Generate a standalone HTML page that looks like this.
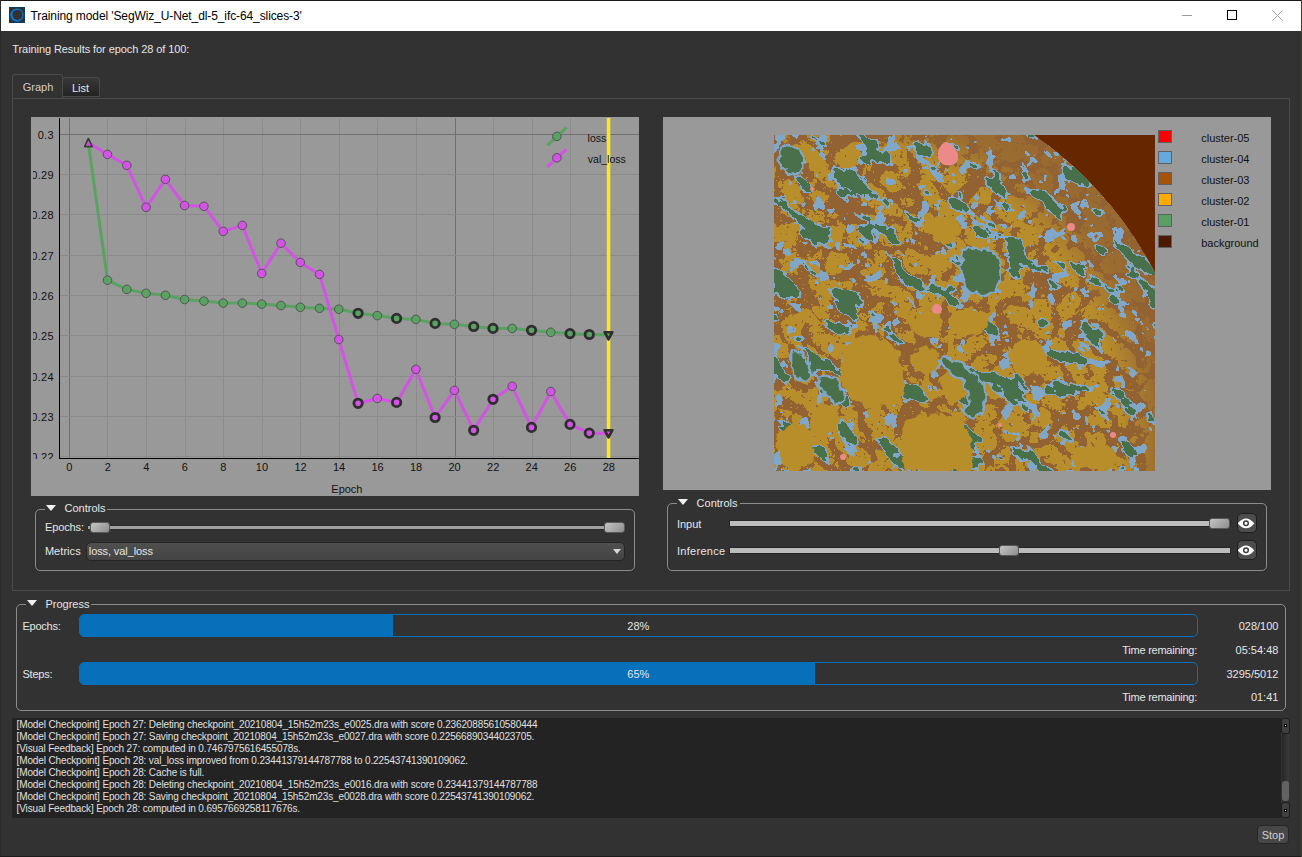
<!DOCTYPE html><html><head><meta charset="utf-8"><style>*{margin:0;padding:0;box-sizing:border-box}
html,body{width:1302px;height:857px;overflow:hidden;background:#323232;font-family:"Liberation Sans",sans-serif;color:#e0e0e0;position:relative}
.a{position:absolute}
.t{position:absolute;white-space:nowrap;font-size:11px;line-height:13px}
.gb{position:absolute;border:1px solid #8c8c8c;border-radius:5px}
.tri{position:absolute;width:0;height:0;border-left:5px solid transparent;border-right:5px solid transparent;border-top:6px solid #f0f0f0}
</style></head><body><div class="a" style="left:0px;top:0px;width:1302px;height:857px;background:#323232"></div>
<div class="a" style="left:1px;top:1px;width:1300px;height:30px;background:#ffffff"></div>
<div class="a" style="left:0px;top:0px;width:1302px;height:1px;background:#1a1a1a"></div>
<div class="a" style="left:0px;top:0px;width:1px;height:857px;background:#2a2a2a"></div>
<div class="a" style="left:0px;top:856px;width:1302px;height:1px;background:#1b1b1b"></div>
<div class="a" style="left:1301px;top:0px;width:1px;height:857px;background:#652d1a"></div>
<svg class="a" style="left:9px;top:7px" width="16" height="16" viewBox="0 0 16 16"><rect x="0.5" y="0.5" width="15" height="15" fill="#323232" stroke="#0e3a62"/><circle cx="7.9" cy="8.2" r="6.6" fill="#0a78d0"/><circle cx="8.5" cy="7.9" r="5.0" fill="#323232"/></svg>
<div class="t" style="font-size:12px;line-height:14px;color:#000;top:8.54px;letter-spacing:-0.1px;left:30.5px;">Training model 'SegWiz_U-Net_dl-5_ifc-64_slices-3'</div>
<div class="a" style="left:1182px;top:15px;width:10px;height:1px;background:#9a9a9a"></div>
<div class="a" style="left:1227px;top:10px;width:10px;height:10px;border:1px solid #000"></div>
<svg class="a" style="left:1272px;top:10px" width="11" height="11" viewBox="0 0 11 11"><path d="M0.5 0.5 L10.5 10.5 M10.5 0.5 L0.5 10.5" stroke="#a8a8a8" stroke-width="1"/></svg>
<div class="t" style="font-size:11px;line-height:13px;color:#e6e6e6;top:42.69px;letter-spacing:-0.08px;left:12.3px;">Training Results for epoch 28 of 100:</div>
<div class="a" style="left:12px;top:98px;width:1278px;height:493px;border:1px solid #4a4a4a"></div>
<div class="a" style="left:62px;top:77px;width:38px;height:20px;background:linear-gradient(#383838,#232323);border:1px solid #4a4a4a;border-radius:3px 3px 0 0"></div>
<div class="a" style="left:12px;top:74px;width:51px;height:24px;background:#323232;border:1px solid #4a4a4a;border-bottom:none;border-radius:3px 3px 0 0"></div>
<div class="t" style="font-size:11px;line-height:13px;color:#cfcfcf;top:80.69px;left:22.7px;">Graph</div>
<div class="t" style="font-size:11px;line-height:13px;color:#e6e6e6;top:81.89px;left:71.9px;">List</div>
<svg class="a" style="left:31px;top:117px" width="608" height="379" viewBox="31 117 608 379">
<defs><clipPath id="ylc"><rect x="33" y="117" width="26" height="342"/></clipPath><clipPath id="plc"><rect x="60" y="118" width="579" height="340"/></clipPath></defs>
<rect x="31" y="117" width="608" height="379" fill="#999999"/>
<g shape-rendering="crispEdges"><line x1="69.5" y1="118" x2="69.5" y2="458" stroke="#6f6f6f"/>
<line x1="107.5" y1="118" x2="107.5" y2="458" stroke="#8b8b8b"/>
<line x1="146.5" y1="118" x2="146.5" y2="458" stroke="#8b8b8b"/>
<line x1="185.5" y1="118" x2="185.5" y2="458" stroke="#8b8b8b"/>
<line x1="223.5" y1="118" x2="223.5" y2="458" stroke="#8b8b8b"/>
<line x1="262.5" y1="118" x2="262.5" y2="458" stroke="#8b8b8b"/>
<line x1="300.5" y1="118" x2="300.5" y2="458" stroke="#8b8b8b"/>
<line x1="339.5" y1="118" x2="339.5" y2="458" stroke="#8b8b8b"/>
<line x1="377.5" y1="118" x2="377.5" y2="458" stroke="#8b8b8b"/>
<line x1="416.5" y1="118" x2="416.5" y2="458" stroke="#8b8b8b"/>
<line x1="455.5" y1="118" x2="455.5" y2="458" stroke="#6f6f6f"/>
<line x1="493.5" y1="118" x2="493.5" y2="458" stroke="#8b8b8b"/>
<line x1="532.5" y1="118" x2="532.5" y2="458" stroke="#8b8b8b"/>
<line x1="570.5" y1="118" x2="570.5" y2="458" stroke="#8b8b8b"/>
<line x1="609.5" y1="118" x2="609.5" y2="458" stroke="#8b8b8b"/>
<line x1="60" y1="134.5" x2="639" y2="134.5" stroke="#6f6f6f"/>
<line x1="60" y1="174.5" x2="639" y2="174.5" stroke="#8b8b8b"/>
<line x1="60" y1="214.5" x2="639" y2="214.5" stroke="#8b8b8b"/>
<line x1="60" y1="255.5" x2="639" y2="255.5" stroke="#8b8b8b"/>
<line x1="60" y1="295.5" x2="639" y2="295.5" stroke="#8b8b8b"/>
<line x1="60" y1="335.5" x2="639" y2="335.5" stroke="#8b8b8b"/>
<line x1="60" y1="376.5" x2="639" y2="376.5" stroke="#8b8b8b"/>
<line x1="60" y1="416.5" x2="639" y2="416.5" stroke="#8b8b8b"/>
<line x1="60" y1="456.5" x2="639" y2="456.5" stroke="#8b8b8b"/></g>
<g clip-path="url(#plc)">
<polyline points="88.3,142.8 107.5,280.2 126.8,289.4 146.1,293.3 165.4,295.3 184.6,299.5 203.9,301.1 223.2,303.1 242.4,303.1 261.7,304.1 281.0,305.5 300.3,307.3 319.5,308.3 338.8,309.2 358.1,313.3 377.3,315.6 396.6,318.4 415.9,319.4 435.1,323.4 454.4,324.3 473.7,326.5 493.0,328.4 512.2,328.4 531.5,330.3 550.8,332.3 570.0,333.6 589.3,334.5 608.6,335.1" fill="none" stroke="#5aa262" stroke-width="3" stroke-linejoin="round"/>
<circle cx="107.5" cy="280.2" r="4.3" fill="#5aa262" stroke="#555" stroke-width="1"/>
<circle cx="126.8" cy="289.4" r="4.3" fill="#5aa262" stroke="#555" stroke-width="1"/>
<circle cx="146.1" cy="293.3" r="4.3" fill="#5aa262" stroke="#555" stroke-width="1"/>
<circle cx="165.4" cy="295.3" r="4.3" fill="#5aa262" stroke="#555" stroke-width="1"/>
<circle cx="184.6" cy="299.5" r="4.3" fill="#5aa262" stroke="#555" stroke-width="1"/>
<circle cx="203.9" cy="301.1" r="4.3" fill="#5aa262" stroke="#555" stroke-width="1"/>
<circle cx="223.2" cy="303.1" r="4.3" fill="#5aa262" stroke="#555" stroke-width="1"/>
<circle cx="242.4" cy="303.1" r="4.3" fill="#5aa262" stroke="#555" stroke-width="1"/>
<circle cx="261.7" cy="304.1" r="4.3" fill="#5aa262" stroke="#555" stroke-width="1"/>
<circle cx="281.0" cy="305.5" r="4.3" fill="#5aa262" stroke="#555" stroke-width="1"/>
<circle cx="300.3" cy="307.3" r="4.3" fill="#5aa262" stroke="#555" stroke-width="1"/>
<circle cx="319.5" cy="308.3" r="4.3" fill="#5aa262" stroke="#555" stroke-width="1"/>
<circle cx="338.8" cy="309.2" r="4.3" fill="#5aa262" stroke="#555" stroke-width="1"/>
<circle cx="358.1" cy="313.3" r="4.2" fill="#5aa262" stroke="#2e2e2e" stroke-width="2.8"/>
<circle cx="377.3" cy="315.6" r="4.3" fill="#5aa262" stroke="#555" stroke-width="1"/>
<circle cx="396.6" cy="318.4" r="4.2" fill="#5aa262" stroke="#2e2e2e" stroke-width="2.8"/>
<circle cx="415.9" cy="319.4" r="4.3" fill="#5aa262" stroke="#555" stroke-width="1"/>
<circle cx="435.1" cy="323.4" r="4.2" fill="#5aa262" stroke="#2e2e2e" stroke-width="2.8"/>
<circle cx="454.4" cy="324.3" r="4.3" fill="#5aa262" stroke="#555" stroke-width="1"/>
<circle cx="473.7" cy="326.5" r="4.2" fill="#5aa262" stroke="#2e2e2e" stroke-width="2.8"/>
<circle cx="493.0" cy="328.4" r="4.2" fill="#5aa262" stroke="#2e2e2e" stroke-width="2.8"/>
<circle cx="512.2" cy="328.4" r="4.3" fill="#5aa262" stroke="#555" stroke-width="1"/>
<circle cx="531.5" cy="330.3" r="4.2" fill="#5aa262" stroke="#2e2e2e" stroke-width="2.8"/>
<circle cx="550.8" cy="332.3" r="4.3" fill="#5aa262" stroke="#555" stroke-width="1"/>
<circle cx="570.0" cy="333.6" r="4.2" fill="#5aa262" stroke="#2e2e2e" stroke-width="2.8"/>
<circle cx="589.3" cy="334.5" r="4.2" fill="#5aa262" stroke="#2e2e2e" stroke-width="2.8"/>
<polyline points="88.3,142.8 107.5,154.4 126.8,165.3 146.1,207.3 165.4,179.3 184.6,205.5 203.9,206.3 223.2,231.4 242.4,225.4 261.7,273.5 281.0,243.2 300.3,262.4 319.5,274.4 338.8,339.5 358.1,403.3 377.3,398.5 396.6,402.4 415.9,369.3 435.1,417.5 454.4,390.4 473.7,430.3 493.0,399.3 512.2,386.3 531.5,427.4 550.8,391.5 570.0,424.4 589.3,433.1 608.6,433.5" fill="none" stroke="#d452e6" stroke-width="3" stroke-linejoin="round"/>
<circle cx="107.5" cy="154.4" r="4.3" fill="#d452e6" stroke="#555" stroke-width="1"/>
<circle cx="126.8" cy="165.3" r="4.3" fill="#d452e6" stroke="#555" stroke-width="1"/>
<circle cx="146.1" cy="207.3" r="4.3" fill="#d452e6" stroke="#555" stroke-width="1"/>
<circle cx="165.4" cy="179.3" r="4.3" fill="#d452e6" stroke="#555" stroke-width="1"/>
<circle cx="184.6" cy="205.5" r="4.3" fill="#d452e6" stroke="#555" stroke-width="1"/>
<circle cx="203.9" cy="206.3" r="4.3" fill="#d452e6" stroke="#555" stroke-width="1"/>
<circle cx="223.2" cy="231.4" r="4.3" fill="#d452e6" stroke="#555" stroke-width="1"/>
<circle cx="242.4" cy="225.4" r="4.3" fill="#d452e6" stroke="#555" stroke-width="1"/>
<circle cx="261.7" cy="273.5" r="4.3" fill="#d452e6" stroke="#555" stroke-width="1"/>
<circle cx="281.0" cy="243.2" r="4.3" fill="#d452e6" stroke="#555" stroke-width="1"/>
<circle cx="300.3" cy="262.4" r="4.3" fill="#d452e6" stroke="#555" stroke-width="1"/>
<circle cx="319.5" cy="274.4" r="4.3" fill="#d452e6" stroke="#555" stroke-width="1"/>
<circle cx="338.8" cy="339.5" r="4.3" fill="#d452e6" stroke="#555" stroke-width="1"/>
<circle cx="358.1" cy="403.3" r="4.2" fill="#d452e6" stroke="#2e2e2e" stroke-width="2.8"/>
<circle cx="377.3" cy="398.5" r="4.3" fill="#d452e6" stroke="#555" stroke-width="1"/>
<circle cx="396.6" cy="402.4" r="4.2" fill="#d452e6" stroke="#2e2e2e" stroke-width="2.8"/>
<circle cx="415.9" cy="369.3" r="4.3" fill="#d452e6" stroke="#555" stroke-width="1"/>
<circle cx="435.1" cy="417.5" r="4.2" fill="#d452e6" stroke="#2e2e2e" stroke-width="2.8"/>
<circle cx="454.4" cy="390.4" r="4.3" fill="#d452e6" stroke="#555" stroke-width="1"/>
<circle cx="473.7" cy="430.3" r="4.2" fill="#d452e6" stroke="#2e2e2e" stroke-width="2.8"/>
<circle cx="493.0" cy="399.3" r="4.2" fill="#d452e6" stroke="#2e2e2e" stroke-width="2.8"/>
<circle cx="512.2" cy="386.3" r="4.3" fill="#d452e6" stroke="#555" stroke-width="1"/>
<circle cx="531.5" cy="427.4" r="4.2" fill="#d452e6" stroke="#2e2e2e" stroke-width="2.8"/>
<circle cx="550.8" cy="391.5" r="4.3" fill="#d452e6" stroke="#555" stroke-width="1"/>
<circle cx="570.0" cy="424.4" r="4.2" fill="#d452e6" stroke="#2e2e2e" stroke-width="2.8"/>
<circle cx="589.3" cy="433.1" r="4.2" fill="#d452e6" stroke="#2e2e2e" stroke-width="2.8"/>
<rect x="606.8" y="118" width="3.5" height="340" fill="#ffe61e"/>
<path d="M88.4 138.6 L92.1 146.5 L84.7 146.5Z" fill="#5aa262" stroke="#333" stroke-width="1.5" stroke-linejoin="round"/>
<path d="M88.4 138.6 L92.1 146.5 L84.7 146.5Z" fill="#d452e6" stroke="#3a3a3a" stroke-width="1.4" stroke-linejoin="round"/>
<path d="M604.6 332.2 L612.4 332.2 L608.5 339.3Z" fill="#5aa262" stroke="#2e2e2e" stroke-width="2.6" stroke-linejoin="round"/>
<path d="M604.6 430.2 L612.4 430.2 L608.5 437.3Z" fill="#d452e6" stroke="#2e2e2e" stroke-width="2.6" stroke-linejoin="round"/>
</g>
<g font-family="Liberation Sans" font-size="11" fill="#111">
<g clip-path="url(#ylc)" letter-spacing="0.35"><text x="54" y="138.5" text-anchor="end">0.3</text><text x="54" y="178.5" text-anchor="end">0.29</text><text x="54" y="218.5" text-anchor="end">0.28</text><text x="54" y="259.5" text-anchor="end">0.27</text><text x="54" y="299.5" text-anchor="end">0.26</text><text x="54" y="339.5" text-anchor="end">0.25</text><text x="54" y="380.5" text-anchor="end">0.24</text><text x="54" y="420.5" text-anchor="end">0.23</text><text x="54" y="460.5" text-anchor="end">0.22</text></g>
<text x="69.2" y="471" text-anchor="middle">0</text><text x="107.7" y="471" text-anchor="middle">2</text><text x="146.3" y="471" text-anchor="middle">4</text><text x="184.8" y="471" text-anchor="middle">6</text><text x="223.4" y="471" text-anchor="middle">8</text><text x="261.9" y="471" text-anchor="middle">10</text><text x="300.5" y="471" text-anchor="middle">12</text><text x="339.0" y="471" text-anchor="middle">14</text><text x="377.5" y="471" text-anchor="middle">16</text><text x="416.1" y="471" text-anchor="middle">18</text><text x="454.6" y="471" text-anchor="middle">20</text><text x="493.2" y="471" text-anchor="middle">22</text><text x="531.7" y="471" text-anchor="middle">24</text><text x="570.2" y="471" text-anchor="middle">26</text><text x="608.8" y="471" text-anchor="middle">28</text>
<text x="331.3" y="492.5">Epoch</text>
</g>
<g shape-rendering="crispEdges"><rect x="59" y="118" width="1" height="341" fill="#000"/><rect x="59" y="458" width="580" height="1" fill="#000"/></g>
<line x1="547.3" y1="145.3" x2="566.5" y2="127.7" stroke="#5aa262" stroke-width="3"/>
<circle cx="556.9" cy="136.4" r="4.3" fill="#5aa262" stroke="#555"/>
<line x1="547.3" y1="166.8" x2="566.5" y2="149.2" stroke="#d452e6" stroke-width="3"/>
<circle cx="556.9" cy="157.8" r="4.3" fill="#d452e6" stroke="#555"/>
<g font-family="Liberation Sans" font-size="10.5" fill="#111"><text x="587.6" y="141.9">loss</text><text x="587.8" y="162.6">val_loss</text></g>
</svg>
<div class="a" style="left:663px;top:117px;width:608px;height:373px;background:#999999"></div>
<svg class="a" style="left:774px;top:135px" width="381" height="336" viewBox="774 135 381 336">
<defs><clipPath id="circ"><circle cx="819.2" cy="445.2" r="377.3"/></clipPath>
<filter id="fy" filterUnits="userSpaceOnUse" x="774" y="135" width="381" height="336" color-interpolation-filters="sRGB">
 <feTurbulence type="turbulence" baseFrequency="0.036" numOctaves="5" seed="7"/>
 <feColorMatrix type="matrix" values="0 0 0 0 0.722  0 0 0 0 0.557  0 0 0 0 0.173  3 0 0 0 -0.355"/>
 <feComponentTransfer><feFuncA type="discrete" tableValues="0 1"/></feComponentTransfer>
</filter><filter id="fos" filterUnits="userSpaceOnUse" x="774" y="135" width="381" height="336" color-interpolation-filters="sRGB">
 <feTurbulence type="fractalNoise" baseFrequency="0.3" numOctaves="2" seed="13"/>
 <feColorMatrix type="matrix" values="0 0 0 0 0.722  0 0 0 0 0.557  0 0 0 0 0.173  3 0 0 0 -1.720"/>
 <feComponentTransfer><feFuncA type="discrete" tableValues="0 1"/></feComponentTransfer>
</filter><filter id="fys" filterUnits="userSpaceOnUse" x="774" y="135" width="381" height="336" color-interpolation-filters="sRGB">
 <feTurbulence type="fractalNoise" baseFrequency="0.22" numOctaves="2" seed="3"/>
 <feColorMatrix type="matrix" values="0 0 0 0 0.573  0 0 0 0 0.384  0 0 0 0 0.196  3 0 0 0 -1.600"/>
 <feComponentTransfer><feFuncA type="discrete" tableValues="0 1"/></feComponentTransfer>
</filter><filter id="fb" filterUnits="userSpaceOnUse" x="650" y="0" width="640" height="620" color-interpolation-filters="sRGB">
 <feTurbulence type="fractalNoise" baseFrequency="0.028 0.05" numOctaves="4" seed="21"/>
 <feColorMatrix type="matrix" values="0 0 0 0 0.502  0 0 0 0 0.651  0 0 0 0 0.784  3 0 0 0 -1.300"/>
 <feComponentTransfer><feFuncA type="discrete" tableValues="0 1"/></feComponentTransfer>
</filter><filter id="fg" filterUnits="userSpaceOnUse" x="650" y="0" width="640" height="620" color-interpolation-filters="sRGB">
 <feTurbulence type="fractalNoise" baseFrequency="0.028 0.05" numOctaves="4" seed="21"/>
 <feColorMatrix type="matrix" values="0 0 0 0 0.282  0 0 0 0 0.439  0 0 0 0 0.290  3 0 0 0 -1.435"/>
 <feComponentTransfer><feFuncA type="discrete" tableValues="0 1"/></feComponentTransfer>
</filter><filter id="fb2" filterUnits="userSpaceOnUse" x="774" y="135" width="381" height="336" color-interpolation-filters="sRGB">
 <feTurbulence type="fractalNoise" baseFrequency="0.07" numOctaves="3" seed="33"/>
 <feColorMatrix type="matrix" values="0 0 0 0 0.502  0 0 0 0 0.651  0 0 0 0 0.784  3 0 0 0 -1.480"/>
 <feComponentTransfer><feFuncA type="discrete" tableValues="0 1"/></feComponentTransfer>
</filter>
<radialGradient id="ringg" gradientUnits="userSpaceOnUse" cx="819.2" cy="445.2" r="377.3"><stop offset="0.80" stop-color="rgb(146, 98, 50)" stop-opacity="0"/><stop offset="0.90" stop-color="rgb(146, 98, 50)" stop-opacity="0.75"/><stop offset="1" stop-color="rgb(146, 98, 50)" stop-opacity="0.85"/></radialGradient>
<filter id="rough" filterUnits="userSpaceOnUse" x="774" y="135" width="381" height="336"><feTurbulence type="fractalNoise" baseFrequency="0.12" numOctaves="2" seed="4"/><feDisplacementMap in="SourceGraphic" scale="9" xChannelSelector="R" yChannelSelector="G"/></filter>
</defs>
<rect x="774" y="135" width="381" height="336" fill="#662600"/>
<g clip-path="url(#circ)">
<rect x="774" y="135" width="381" height="336" fill="rgb(146, 98, 50)"/>
<rect x="774" y="135" width="381" height="336" filter="url(#fos)"/>
<rect x="774" y="135" width="381" height="336" filter="url(#fy)"/>
<rect x="774" y="135" width="381" height="336" filter="url(#fys)"/>
<circle cx="819.2" cy="445.2" r="377.3" fill="url(#ringg)"/>
<rect x="774" y="135" width="381" height="336" filter="url(#fb2)"/>
<g transform="rotate(35 964 303)"><rect x="650" y="0" width="640" height="620" filter="url(#fb)"/><rect x="650" y="0" width="640" height="620" filter="url(#fg)"/></g>
<g fill="rgb(184, 142, 44)" filter="url(#rough)">
<path d="M870 336 Q892 338 900 360 Q906 385 903 398 Q890 408 866 405 Q846 400 841 380 Q838 350 852 340 Q860 335 870 336Z"/>
<ellipse cx="927" cy="325" rx="15" ry="13"/>
<ellipse cx="925" cy="360" rx="13" ry="14"/>
<ellipse cx="957" cy="384" rx="17" ry="16"/>
<path d="M780 430 Q795 420 810 428 Q818 445 812 462 Q798 470 783 465 Q774 450 780 430Z"/>
<ellipse cx="825" cy="420" rx="14" ry="14"/>
<path d="M905 420 Q930 410 960 418 Q978 440 972 471 L905 471 Q898 445 905 420Z"/>
<ellipse cx="1027" cy="357" rx="18" ry="18"/>
<ellipse cx="968" cy="322" rx="19" ry="14"/>
<ellipse cx="1095" cy="458" rx="24" ry="13"/>
<ellipse cx="945" cy="230" rx="15" ry="14"/>
</g>
<g fill="rgb(72, 112, 74)" stroke="rgb(128, 166, 200)" stroke-width="2.5" filter="url(#rough)">
<path d="M943 358 Q970 362 984 385 Q990 410 975 418 Q960 416 968 402 Q972 385 950 372 Q938 364 943 358Z"/>
<path d="M818 378 Q835 372 843 390 Q846 405 838 404 Q822 396 818 378Z"/>
<path d="M792 350 Q806 352 810 370 Q812 384 800 380 Q788 370 792 350Z"/>
<path d="M962 250 Q990 244 1000 262 Q1004 290 985 297 Q962 292 960 270Z"/>
<path d="M780 145 Q798 140 805 160 Q803 178 788 174 Q774 165 780 145Z"/>
</g>
<g fill="rgb(236, 138, 138)"><path d="M945 142 Q953 143 957 152 Q961 162 952 165 Q941 167 938 158 Q936 148 945 142Z"/><circle cx="937" cy="309" r="5"/><circle cx="1071" cy="227" r="4"/><circle cx="1113" cy="435" r="3"/><circle cx="843" cy="457" r="3"/><circle cx="812" cy="189" r="2"/><circle cx="1000" cy="425" r="2"/></g>
</g>
</svg>
<div class="a" style="left:1158px;top:130px;width:14px;height:13px;background:#ff0000;border:1px solid #606060"></div>
<div class="a" style="left:1158px;top:151px;width:14px;height:13px;background:#66aadd;border:1px solid #606060"></div>
<div class="a" style="left:1158px;top:172px;width:14px;height:13px;background:#a4540a;border:1px solid #606060"></div>
<div class="a" style="left:1158px;top:193px;width:14px;height:13px;background:#ffaa00;border:1px solid #606060"></div>
<div class="a" style="left:1158px;top:214px;width:14px;height:13px;background:#5aa064;border:1px solid #606060"></div>
<div class="a" style="left:1158px;top:235px;width:14px;height:13px;background:#4c1a00;border:1px solid #606060"></div>

<div class="t" style="font-size:11px;line-height:13px;color:#111;top:131.69px;left:1201.2px;">cluster-05</div>
<div class="t" style="font-size:11px;line-height:13px;color:#111;top:152.69px;left:1201.2px;">cluster-04</div>
<div class="t" style="font-size:11px;line-height:13px;color:#111;top:173.69px;left:1201.2px;">cluster-03</div>
<div class="t" style="font-size:11px;line-height:13px;color:#111;top:194.69px;left:1201.2px;">cluster-02</div>
<div class="t" style="font-size:11px;line-height:13px;color:#111;top:215.69px;left:1201.2px;">cluster-01</div>
<div class="t" style="font-size:11px;line-height:13px;color:#111;top:236.69px;left:1201.2px;">background</div>
<div class="gb" style="left:35px;top:509px;width:600px;height:62px"></div>
<div class="a" style="left:45px;top:505px;width:62px;height:8px;background:#323232"></div>
<div class="tri" style="left:46px;top:505px"></div>
<div class="t" style="font-size:11px;line-height:13px;color:#e6e6e6;top:502.29px;left:64.5px;">Controls</div>
<div class="t" style="font-size:11px;line-height:13px;color:#e6e6e6;top:521.39px;letter-spacing:-0.1px;left:44.9px;">Epochs:</div>
<div class="a" style="left:88px;top:526px;width:536px;height:3px;background:#a2a2a2;box-shadow:0 0 0 1px #2b2b2b"></div>
<div class="a" style="left:90px;top:522px;width:20px;height:11px;background:linear-gradient(135deg,#c4c4c4,#8e8e8e);border:1px solid #5a5a5a;border-radius:3px"></div>
<div class="a" style="left:604px;top:522px;width:21px;height:11px;background:linear-gradient(135deg,#c4c4c4,#8e8e8e);border:1px solid #5a5a5a;border-radius:3px"></div>
<div class="t" style="font-size:11px;line-height:13px;color:#e6e6e6;top:545.19px;letter-spacing:0.05px;left:44.9px;">Metrics</div>
<div class="a" style="left:86px;top:542px;width:539px;height:19px;background:linear-gradient(#4f4f4f,#444);border:1px solid #252525;border-radius:5px"></div>
<div class="t" style="font-size:11px;line-height:13px;color:#e6e6e6;top:545.19px;letter-spacing:-0.1px;left:88.8px;">loss, val_loss</div>
<div class="a" style="left:613px;top:549px;width:0;height:0;border-left:4px solid transparent;border-right:4px solid transparent;border-top:5px solid #d8d8d8"></div>
<div class="gb" style="left:667px;top:503px;width:600px;height:68px"></div>
<div class="a" style="left:677px;top:499px;width:63px;height:8px;background:#323232"></div>
<div class="tri" style="left:678px;top:499px"></div>
<div class="t" style="font-size:11px;line-height:13px;color:#e6e6e6;top:496.59px;left:696.6px;">Controls</div>
<div class="t" style="font-size:11px;line-height:13px;color:#e6e6e6;top:518.09px;left:676.9px;">Input</div>
<div class="t" style="font-size:11px;line-height:13px;color:#e6e6e6;top:544.99px;letter-spacing:0.3px;left:676.9px;">Inference</div>
<div class="a" style="left:730px;top:521px;width:500px;height:5px;background:#bcbcbc;box-shadow:0 0 0 1px #262626"></div>
<div class="a" style="left:730px;top:548px;width:500px;height:5px;background:#bcbcbc;box-shadow:0 0 0 1px #262626"></div>
<div class="a" style="left:1209px;top:518px;width:21px;height:11px;background:linear-gradient(135deg,#c4c4c4,#8e8e8e);border:1px solid #5a5a5a;border-radius:3px"></div>
<div class="a" style="left:999px;top:545px;width:20px;height:11px;background:linear-gradient(135deg,#c4c4c4,#8e8e8e);border:1px solid #5a5a5a;border-radius:3px"></div>
<div class="a" style="left:1237px;top:513px;width:20px;height:20px;background:#4d4d4d;border:1px solid #1e1e1e;border-radius:5px;overflow:hidden"><svg width="18" height="18" viewBox="0 0 18 18" style="display:block;position:absolute;left:-1px;top:-1px"><path d="M0.7 10.4 Q9 0.6 17.3 10.4 Q9 20.2 0.7 10.4Z" fill="#fff"/><circle cx="9" cy="10.3" r="2.3" fill="#fff" stroke="#3c3c3c" stroke-width="1.5"/></svg></div>
<div class="a" style="left:1237px;top:540px;width:20px;height:20px;background:#4d4d4d;border:1px solid #1e1e1e;border-radius:5px;overflow:hidden"><svg width="18" height="18" viewBox="0 0 18 18" style="display:block;position:absolute;left:-1px;top:-1px"><path d="M0.7 10.4 Q9 0.6 17.3 10.4 Q9 20.2 0.7 10.4Z" fill="#fff"/><circle cx="9" cy="10.3" r="2.3" fill="#fff" stroke="#3c3c3c" stroke-width="1.5"/></svg></div>
<div class="gb" style="left:16px;top:604px;width:1270px;height:107px"></div>
<div class="a" style="left:26px;top:600px;width:65px;height:8px;background:#323232"></div>
<div class="tri" style="left:27px;top:600px"></div>
<div class="t" style="font-size:11px;line-height:13px;color:#e6e6e6;top:597.99px;left:45.4px;">Progress</div>
<div class="t" style="font-size:11px;line-height:13px;color:#e6e6e6;top:619.89px;letter-spacing:-0.25px;left:22.5px;">Epochs:</div>
<div class="t" style="font-size:11px;line-height:13px;color:#e6e6e6;top:667.89px;letter-spacing:-0.25px;left:22.5px;">Steps:</div>
<div class="a" style="left:79px;top:614px;width:1119px;height:23px;border:1px solid #0670bb;border-radius:5px;overflow:hidden"><div class="a" style="left:0;top:0;width:313px;height:23px;background:#0670bb"></div></div>
<div class="t" style="font-size:11px;line-height:13px;color:#e6e6e6;top:619.69px;left:638.3px;transform:translateX(-50%);">28%</div>
<div class="a" style="left:79px;top:662px;width:1119px;height:23px;border:1px solid #0670bb;border-radius:5px;overflow:hidden"><div class="a" style="left:0;top:0;width:735px;height:23px;background:#0670bb"></div></div>
<div class="t" style="font-size:11px;line-height:13px;color:#e6e6e6;top:667.69px;left:638.3px;transform:translateX(-50%);">65%</div>
<div class="t" style="font-size:11px;line-height:13px;color:#e6e6e6;top:619.59px;right:23.59999999999991px;">028/100</div>
<div class="t" style="font-size:11px;line-height:13px;color:#e6e6e6;top:643.69px;letter-spacing:-0.25px;right:105px;">Time remaining:</div>
<div class="t" style="font-size:11px;line-height:13px;color:#e6e6e6;top:643.69px;right:23.59999999999991px;">05:54:48</div>
<div class="t" style="font-size:11px;line-height:13px;color:#e6e6e6;top:667.69px;right:23.59999999999991px;">3295/5012</div>
<div class="t" style="font-size:11px;line-height:13px;color:#e6e6e6;top:691.39px;letter-spacing:-0.25px;right:105px;">Time remaining:</div>
<div class="t" style="font-size:11px;line-height:13px;color:#e6e6e6;top:691.39px;right:23.59999999999991px;">01:41</div>
<div class="a" style="left:12px;top:718px;width:1269px;height:100px;background:#232323"></div>
<div class="t" style="font-size:10px;line-height:12px;color:#e0e0e0;top:718.93px;letter-spacing:-0.135px;left:16.6px;">[Model Checkpoint] Epoch 27: Deleting checkpoint_20210804_15h52m23s_e0025.dra with score 0.23620885610580444</div>
<div class="t" style="font-size:10px;line-height:12px;color:#e0e0e0;top:730.93px;letter-spacing:-0.135px;left:16.6px;">[Model Checkpoint] Epoch 27: Saving checkpoint_20210804_15h52m23s_e0027.dra with score 0.22566890344023705.</div>
<div class="t" style="font-size:10px;line-height:12px;color:#e0e0e0;top:742.93px;letter-spacing:-0.135px;left:16.6px;">[Visual Feedback] Epoch 27: computed in 0.7467975616455078s.</div>
<div class="t" style="font-size:10px;line-height:12px;color:#e0e0e0;top:754.93px;letter-spacing:-0.135px;left:16.6px;">[Model Checkpoint] Epoch 28: val_loss improved from 0.23441379144787788 to 0.22543741390109062.</div>
<div class="t" style="font-size:10px;line-height:12px;color:#e0e0e0;top:766.93px;letter-spacing:-0.135px;left:16.6px;">[Model Checkpoint] Epoch 28: Cache is full.</div>
<div class="t" style="font-size:10px;line-height:12px;color:#e0e0e0;top:778.93px;letter-spacing:-0.135px;left:16.6px;">[Model Checkpoint] Epoch 28: Deleting checkpoint_20210804_15h52m23s_e0016.dra with score 0.23441379144787788</div>
<div class="t" style="font-size:10px;line-height:12px;color:#e0e0e0;top:790.93px;letter-spacing:-0.135px;left:16.6px;">[Model Checkpoint] Epoch 28: Saving checkpoint_20210804_15h52m23s_e0028.dra with score 0.22543741390109062.</div>
<div class="t" style="font-size:10px;line-height:12px;color:#e0e0e0;top:802.93px;letter-spacing:-0.135px;left:16.6px;">[Visual Feedback] Epoch 28: computed in 0.6957669258117676s.</div>
<div class="a" style="left:1281px;top:718px;width:9px;height:16px;background:#404040;border:1px solid #1c1c1c;border-radius:3px"></div>
<div class="a" style="left:1284px;top:724px;width:3px;height:3px;background:#000"></div>
<div class="a" style="left:1285px;top:725px;width:1px;height:1px;background:#fff"></div>
<div class="a" style="left:1282px;top:734px;width:7px;height:48px;background:linear-gradient(90deg,#262626,#3a3a3a)"></div>
<div class="a" style="left:1282px;top:781px;width:7px;height:20px;background:#626262;border-radius:3px"></div>
<div class="a" style="left:1281px;top:802px;width:9px;height:16px;background:#404040;border:1px solid #1c1c1c;border-radius:3px"></div>
<div class="a" style="left:1284px;top:809px;width:3px;height:3px;background:#000"></div>
<div class="a" style="left:1285px;top:810px;width:1px;height:1px;background:#fff"></div>
<div class="a" style="left:1257px;top:825px;width:32px;height:19px;background:#474747;border:1px solid #262626;border-radius:4px"></div>
<div class="t" style="font-size:11px;line-height:13px;color:#d0d0d0;top:828.69px;left:1273px;transform:translateX(-50%);">Stop</div></body></html>
